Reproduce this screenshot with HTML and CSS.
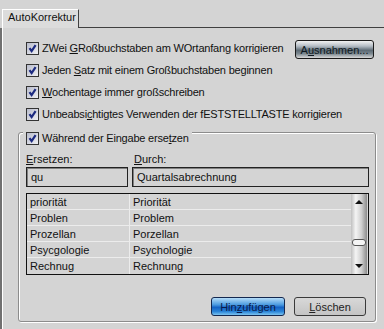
FILE: index.html
```html
<!DOCTYPE html>
<html lang="de">
<head>
    <meta charset="UTF-8">
    <title>AutoKorrektur</title>
    <link rel="stylesheet" href="styles.css">
</head>
<body>

<div class="tabs">
    <div class="tab">AutoKorrektur</div>
    <div class="tab-rest"></div>
</div>

<div class="panel">
    <div class="options">
        <div class="opt">
            <span class="box"><svg viewBox="0 0 11 11"><path d="M2.5 5.2 L4.6 8 L8.6 2.2"/></svg></span>
            <span class="label">ZWei <u>G</u>Roßbuchstaben am WOrtanfang korrigieren</span>
            <button class="btn dark">A<u>u</u>snahmen...</button>
        </div>
        <div class="opt">
            <span class="box"><svg viewBox="0 0 11 11"><path d="M2.5 5.2 L4.6 8 L8.6 2.2"/></svg></span>
            <span class="label">Jeden <u>S</u>atz mit einem Großbuchstaben beginnen</span>
        </div>
        <div class="opt">
            <span class="box"><svg viewBox="0 0 11 11"><path d="M2.5 5.2 L4.6 8 L8.6 2.2"/></svg></span>
            <span class="label"><u>W</u>ochentage immer großschreiben</span>
        </div>
        <div class="opt">
            <span class="box"><svg viewBox="0 0 11 11"><path d="M2.5 5.2 L4.6 8 L8.6 2.2"/></svg></span>
            <span class="label">Unbeabsi<u>c</u>htigtes Verwenden der fESTSTELLTASTE korrigieren</span>
        </div>
    </div>

    <div class="group">
        <div class="legend">
            <span class="box"><svg viewBox="0 0 11 11"><path d="M2.5 5.2 L4.6 8 L8.6 2.2"/></svg></span>
            <span class="label">Während der Eingabe erse<u>t</u>zen</span>
        </div>

        <div class="fields">
            <div class="field-label"><u>E</u>rsetzen:</div>
            <div class="field-label durch"><u>D</u>urch:</div>
            <div class="input">qu</div>
            <div class="input">Quartalsabrechnung</div>
        </div>

        <div class="list">
            <div class="rows">
                <div class="row"><span class="c1">priorität</span><span class="c2">Priorität</span></div>
                <div class="row"><span class="c1">Problen</span><span class="c2">Problem</span></div>
                <div class="row"><span class="c1">Prozellan</span><span class="c2">Porzellan</span></div>
                <div class="row"><span class="c1">Psycgologie</span><span class="c2">Psychologie</span></div>
                <div class="row"><span class="c1">Rechnug</span><span class="c2">Rechnung</span></div>
            </div>
            <div class="scrollbar">
                <div class="arrow up"></div>
                <div class="track"><div class="thumb"></div></div>
                <div class="arrow down"></div>
            </div>
        </div>

        <div class="actions">
            <button class="btn blue">Hin<u>z</u>ufügen</button>
            <button class="btn grey"><u>L</u>öschen</button>
        </div>
    </div>
</div>

</body>
</html>
```

FILE: styles.css
```css
body {
    margin: 0;
    background: #d4d4d4;
    font-family: 'Liberation Sans', Arial, sans-serif;
    font-size: 11px;
    color: #111;
    width: 384px;
    height: 329px;
    overflow: hidden;
}

u {
    text-underline-offset: 1px;
}

.tabs {
    display: flex;
    padding-top: 9px;
    padding-left: 2px;
}

.tab {
    width: 77px;
    height: 19px;
    line-height: 15px;
    padding: 0 4px 0 5px;
    box-sizing: border-box;
    background: #dcdcdc;
    border-top: 1px solid #fff;
    border-left: 1px solid #fff;
    border-right: 1px solid #404040;
}

.tab-rest {
    flex: 1;
    border-bottom: 1px solid #404040;
}

.panel {
    margin-left: 2px;
    border-left: 1px solid #fff;
    box-shadow: -2px 0 0 #707070;
    padding: 0 8px 0 15px;
    height: 301px;
    box-sizing: border-box;
}

.options {
    padding: 9px 0 0 8px;
}

.opt {
    display: flex;
    align-items: center;
    height: 22px;
}

.box {
    width: 11px;
    height: 11px;
    border: 1px solid #333;
    background: linear-gradient(135deg, #b8bccc, #eeeef2);
    margin-right: 3px;
    flex: none;
}

.box svg {
    display: block;
    width: 11px;
    height: 11px;
}

.box path {
    fill: none;
    stroke: #1c2a80;
    stroke-width: 2.2;
}

.label {
    white-space: nowrap;
    letter-spacing: -0.2px;
}

.btn {
    font-family: inherit;
    font-size: 11px;
    height: 19px;
    padding: 0;
    border-radius: 3px;
    cursor: pointer;
}

.btn.dark {
    margin-left: auto;
    margin-right: 2px;
    margin-top: 3px;
    width: 79px;
    border: 1px solid #1a1a1a;
    color: #0e1820;
    background: linear-gradient(#f2f2f2, #b4bcc4 30%, #5c6a74 55%, #7c8890 75%, #d8d8d8);
}

.group {
    margin-top: 7px;
    width: 358px;
    box-sizing: border-box;
    border: 1px solid #8c8c8c;
    border-radius: 3px;
    box-shadow: inset 1px 1px 0 #fff, 1px 1px 0 #fff;
    padding: 0 6px 5px 7px;
}

.legend {
    display: flex;
    align-items: center;
    width: fit-content;
    height: 14px;
    margin: -2px 0 0 -3px;
    padding: 0 3px;
    background: #d4d4d4;
}

.fields {
    display: grid;
    grid-template-columns: 102px 237px;
    column-gap: 4px;
    margin-top: 7px;
}

.field-label {
    line-height: 14px;
    margin-bottom: 1px;
}

.field-label.durch {
    padding-left: 2px;
}

.input {
    height: 20px;
    box-sizing: border-box;
    border: 1px solid #222;
    box-shadow: inset 1px 1px 0 #808080;
    line-height: 18px;
    padding-left: 4px;
}

.list {
    display: flex;
    margin-top: 6px;
    border: 1px solid #111;
    height: 82px;
    box-sizing: border-box;
}

.rows {
    flex: 1;
}

.row {
    display: flex;
    height: 16px;
    line-height: 16px;
    border-bottom: 1px solid #ececec;
    box-sizing: border-box;
}

.row:last-child {
    border-bottom: none;
}

.c1 {
    width: 103px;
    padding-left: 3px;
    box-sizing: border-box;
    border-right: 1px solid #ececec;
}

.c2 {
    padding-left: 3px;
}

.scrollbar {
    width: 16px;
    display: flex;
    flex-direction: column;
    background: linear-gradient(to right, #c0c0c0, #f4f4f4 30%, #d0d0d0 65%, #8c8c8c);
    margin-right: 1px;
}

.arrow {
    height: 16px;
    display: flex;
    align-items: center;
    justify-content: center;
}

.arrow::after {
    content: "";
    border-left: 4px solid transparent;
    border-right: 4px solid transparent;
}

.arrow.up::after {
    border-bottom: 4px solid #111;
}

.arrow.down::after {
    border-top: 4px solid #111;
}

.track {
    flex: 1;
}

.thumb {
    margin: 29px auto 0;
    width: 12px;
    height: 5px;
    border: 1px solid #555;
    border-radius: 3px;
    background: #f4f4f4;
}

.actions {
    display: flex;
    justify-content: flex-end;
    gap: 9px;
    margin-top: 22px;
    padding-right: 3px;
}

.btn.blue {
    width: 74px;
    border: 1px solid #142850;
    color: #0a1a4a;
    background: linear-gradient(#b4dcf8, #4a9ae0 40%, #1462c4 55%, #2c86d8 80%, #7cc4f0);
}

.btn.grey {
    width: 72px;
    border: 1px solid #3a3a3a;
    color: #222;
    background: linear-gradient(#d8d8d8, #c4c4c4);
}
```
